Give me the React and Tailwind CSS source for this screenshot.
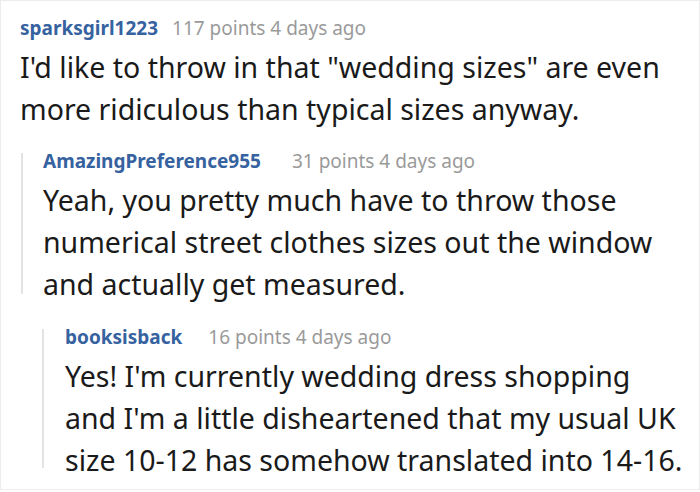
const comments = [
  {
    user: 'sparksgirl1223',
    meta: '117 points 4 days ago',
    lines: [
      'I\'d like to throw in that "wedding sizes" are even',
      'more ridiculous than typical sizes anyway.',
    ],
  },
  {
    user: 'AmazingPreference955',
    meta: '31 points 4 days ago',
    lines: [
      'Yeah, you pretty much have to throw those',
      'numerical street clothes sizes out the window',
      'and actually get measured.',
    ],
  },
  {
    user: 'booksisback',
    meta: '16 points 4 days ago',
    lines: [
      "Yes! I'm currently wedding dress shopping",
      "and I'm a little disheartened that my usual UK",
      'size 10-12 has somehow translated into 14-16.',
    ],
  },
];

function CommentBody({ c, gap }) {
  return (
    <div className="min-w-0">
      <div className="flex items-center h-[24px]">
        <span className="text-[19px] font-bold text-[#36629f] leading-[24px]">{c.user}</span>
        <span className={`text-[19px] text-[#9a9a9a] leading-[24px] ${gap}`}>{c.meta}</span>
      </div>
      <div className="mt-[6px] text-[28.5px] leading-[42px] text-[#1a1a1a] whitespace-nowrap">
        {c.lines.map((l, i) => (
          <div key={i}>{l}</div>
        ))}
      </div>
    </div>
  );
}

export default function App() {
  return (
    <div
      className="w-[700px] h-[490px] bg-white border border-[#ececec] overflow-hidden"
      style={{ fontFamily: '"Noto Sans", "Open Sans", sans-serif' }}
    >
      <div className="pl-[19px] pt-[15px]">
        {/* top level comment */}
        <CommentBody c={comments[0]} gap="ml-[14px]" />

        {/* reply */}
        <div className="flex mt-[19px] ml-[1px]">
          <div className="w-[2px] bg-[#e3e3e3] mt-1 mb-[11px] shrink-0" />
          <div className="pl-[20px]">
            <CommentBody c={comments[1]} gap="ml-[31px]" />
          </div>
        </div>

        {/* nested reply */}
        <div className="flex mt-[20px] ml-[22px]">
          <div className="w-[2px] bg-[#e3e3e3] mt-1 mb-[13px] shrink-0" />
          <div className="pl-[21px]">
            <CommentBody c={comments[2]} gap="ml-[26px]" />
          </div>
        </div>
      </div>
    </div>
  );
}
